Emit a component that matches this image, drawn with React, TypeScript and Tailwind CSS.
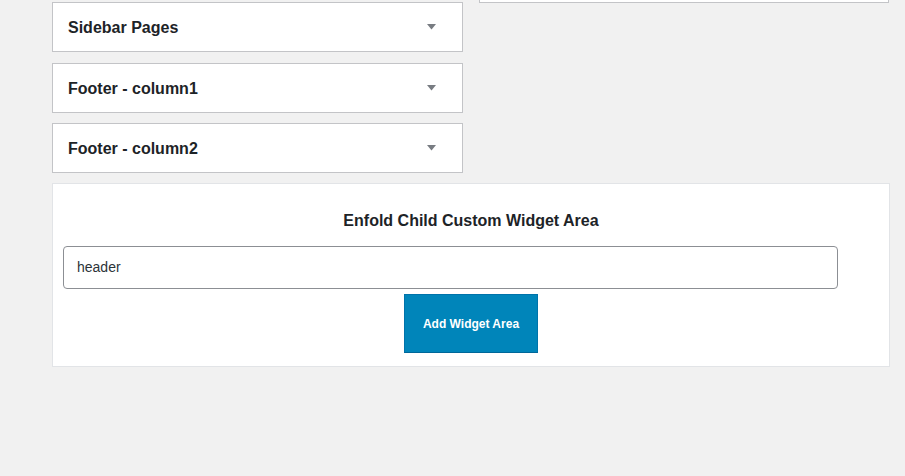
import React from "react";

function Caret() {
  return (
    <svg width="9" height="6" viewBox="0 0 9 6" className="block">
      <path d="M0 0 H9 L4.5 5.5 Z" fill="#787c82" />
    </svg>
  );
}

function SidebarBox({ title, className = "" }: { title: string; className?: string }) {
  return (
    <div
      className={`h-[50px] bg-white border border-[#c3c4c7] flex items-center justify-between pl-[15px] pr-[26px] ${className}`}
    >
      <span className="text-[16px] font-bold text-[#1d2327] leading-none pt-[2px]">{title}</span>
      <Caret />
    </div>
  );
}

export default function App() {
  return (
    <div
      className="min-h-[476px] w-full bg-[#f1f1f1] pl-[52px] pr-[16px]"
      style={{ fontFamily: '"Liberation Sans", Arial, sans-serif' }}
    >
      <div className="flex items-start gap-[16px]">
        <div className="w-[411px] flex flex-col mt-[2px]">
          <SidebarBox title="Sidebar Pages" />
          <SidebarBox title="Footer - column1" className="mt-[11px]" />
          <SidebarBox title="Footer - column2" className="mt-[10px]" />
        </div>
        <div className="w-[410px] h-[3px] bg-white border-x border-b border-[#c3c4c7]" />
      </div>
      <div className="mt-[10px] w-[838px] bg-white border border-[#e2e4e7] pt-[25px] pb-[13px] px-[10px] flex flex-col">
        <h3 className="text-center text-[16px] leading-[24px] font-bold text-[#1d2327]">
          Enfold Child Custom Widget Area
        </h3>
        <div className="mt-[13px] w-[775px] h-[43px] rounded-[4px] border border-[#8c8f94] bg-white flex items-center pl-[13px] text-[14px] text-[#2c3338]">
          header
        </div>
        <div className="mt-[5px] flex justify-center">
          <button className="w-[134px] h-[59px] bg-[#0085ba] border border-[#0073aa] border-b-[#006799] text-white text-[12px] font-bold">
            Add Widget Area
          </button>
        </div>
      </div>
    </div>
  );
}
